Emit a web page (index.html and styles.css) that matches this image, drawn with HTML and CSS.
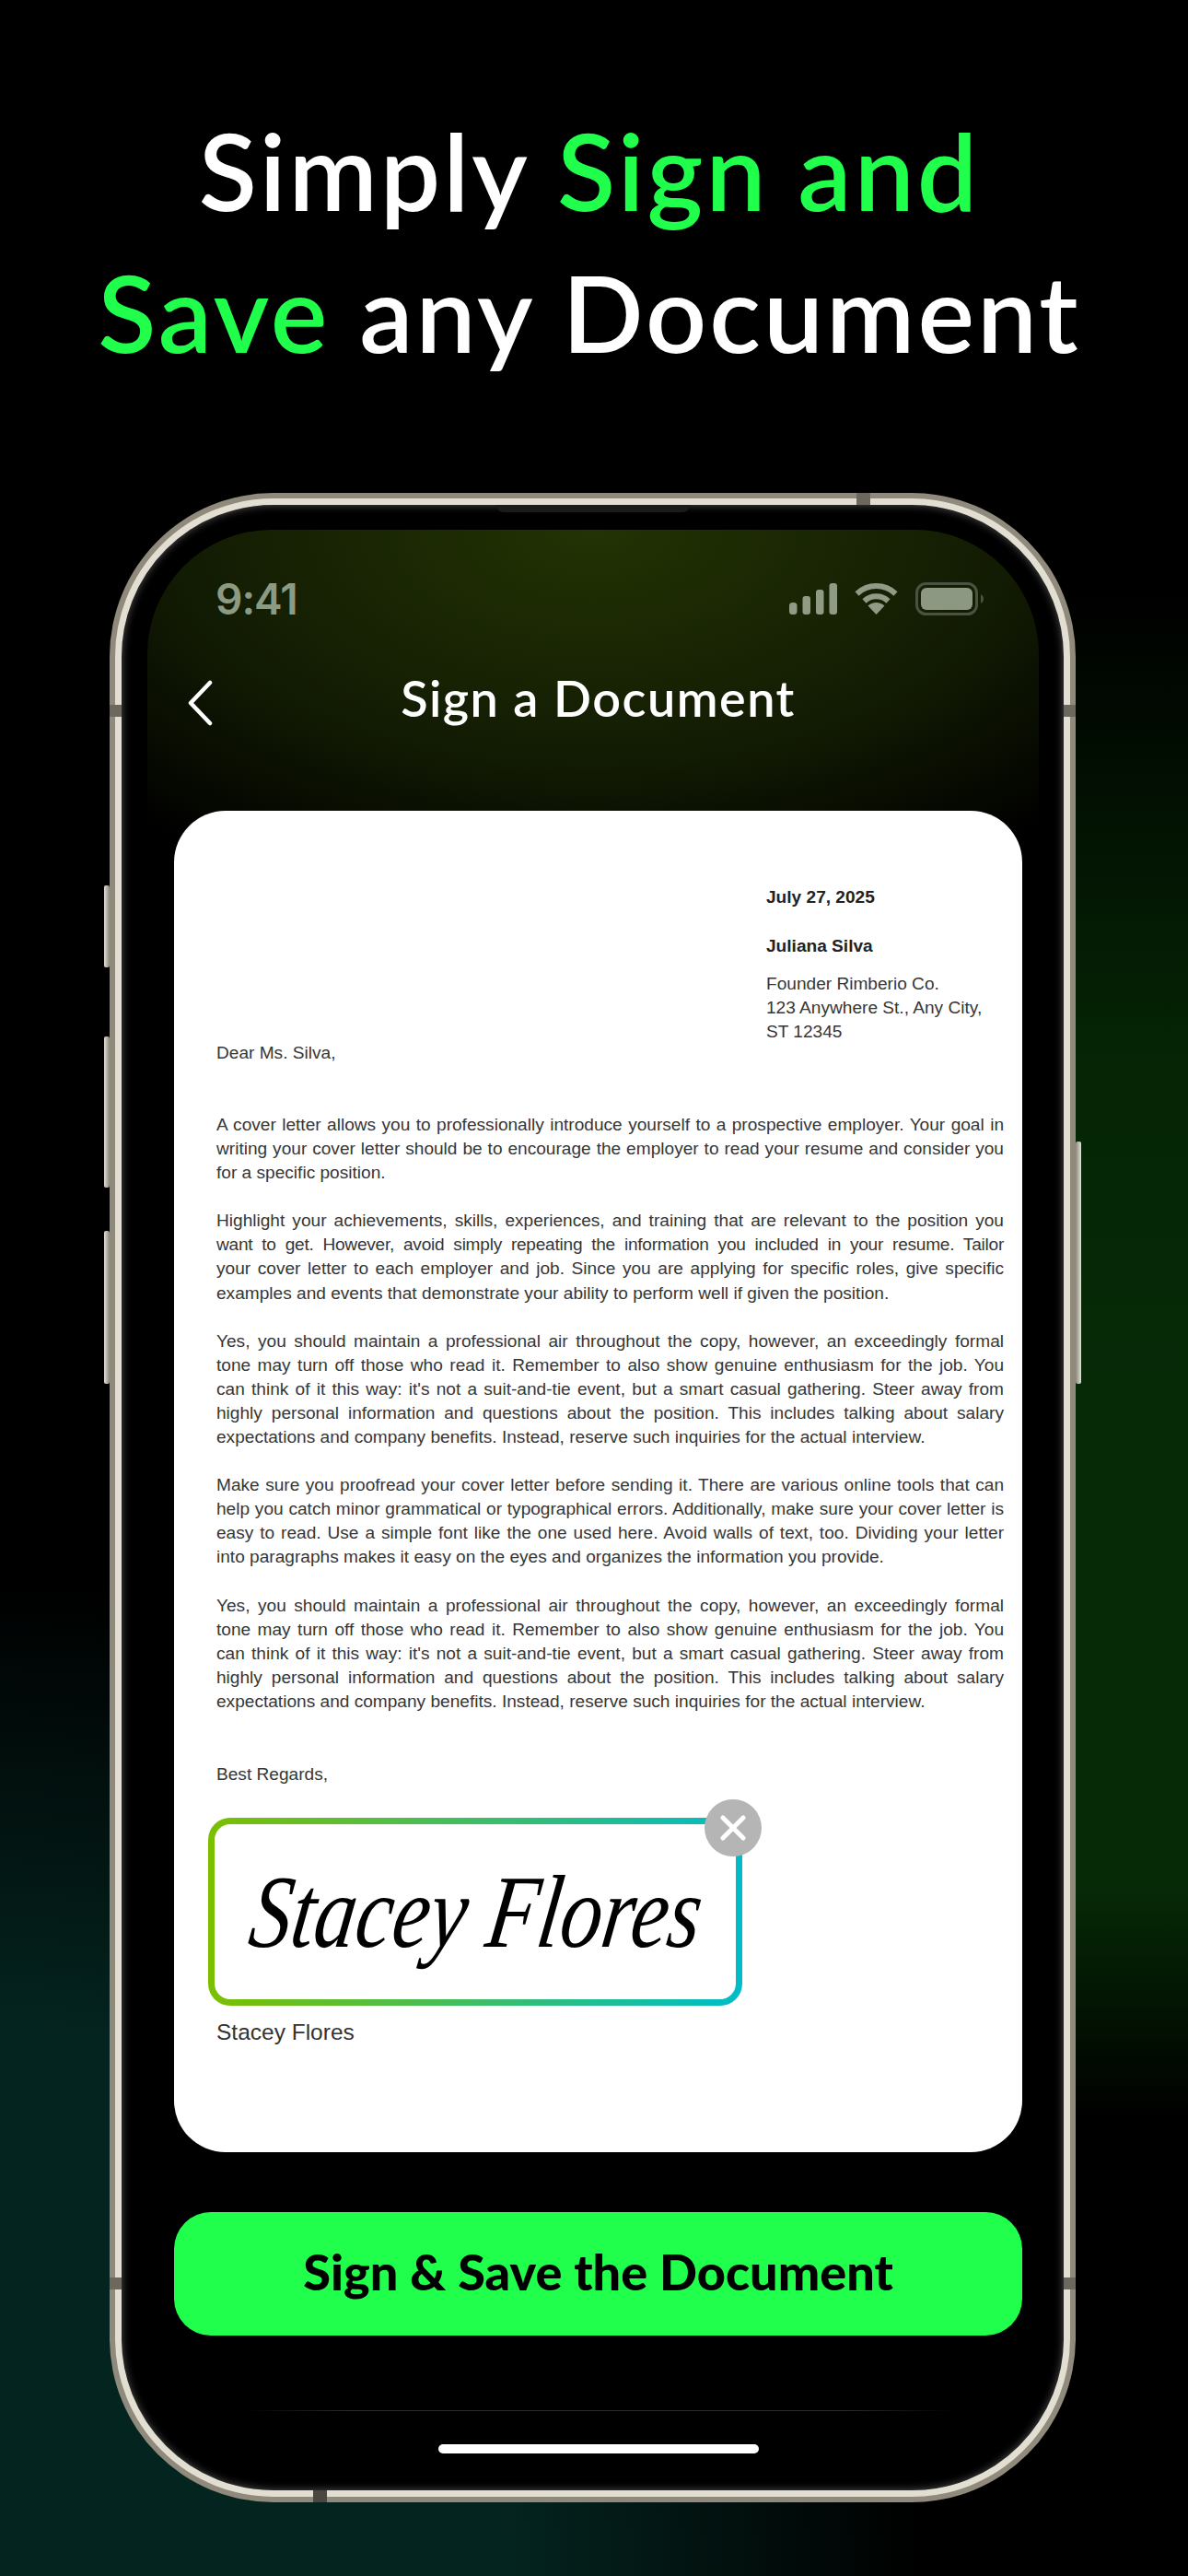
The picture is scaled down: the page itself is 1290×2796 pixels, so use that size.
FILE: index.html
```html
<!DOCTYPE html>
<html lang="en">
<head>
<meta charset="utf-8">
<title>Sign a Document</title>
<link rel="stylesheet" href="styles.css">
</head>
<body>
<h1 class="headline">Simply <span class="accent">Sign and</span><br><span class="accent">Save</span> any Document</h1>
<div class="phone">
  <i class="hw side-btn btn-a"></i><i class="hw side-btn btn-b"></i><i class="hw side-btn btn-c"></i><i class="hw side-btn btn-d"></i>
  <i class="hw band band-lt"></i><i class="hw band band-rt"></i><i class="hw band band-lb"></i><i class="hw band band-rb"></i><i class="hw band band-top"></i><i class="hw band band-bottom"></i>
  <i class="hw notch"></i>
  <main class="screen">
    <div class="status">
      <span class="time">9:41</span>
      <div class="status-icons">
        <svg class="signal" width="52" height="34" viewBox="0 0 52 34"><rect x="0" y="21" width="8.5" height="13" rx="3.5"/><rect x="14.5" y="14" width="8.5" height="20" rx="3"/><rect x="29" y="7" width="8.5" height="27" rx="3"/><rect x="43.5" y="0" width="8.5" height="34" rx="3"/></svg>
        <svg class="wifi" width="47" height="34" viewBox="0 0 47 34"><path class="arc" d="M2.5 11.5A30.5 30.5 0 0 1 44.500 11.500"/><path class="arc" d="M10.500 19.500A19 19 0 0 1 36.500 19.500"/><path class="wedge" d="M23.500 34L14.500 24.500A13 13 0 0 1 32.500 24.500Z"/></svg>
        <svg class="battery" width="74" height="36" viewBox="0 0 74 36"><rect class="batt-shell" x="1.500" y="1.500" width="65" height="33" rx="10"/><rect class="batt-fill" x="6" y="6" width="56" height="24" rx="6"/><path class="batt-nub" d="M71 13c2 1 3 3 3 5s-1 4-3 5z"/></svg>
      </div>
    </div>
    <nav class="nav">
      <svg class="back" width="28" height="50" viewBox="0 0 28 50"><path d="M24 3L3 25L24 47"/></svg>
      <span class="nav-title">Sign a Document</span>
    </nav>
    <article class="doc">
      <div class="doc-head">
        <p class="strong">July 27, 2025</p>
        <p class="strong name">Juliana Silva</p>
        <p class="address">Founder Rimberio Co.<br>123 Anywhere St., Any City,<br>ST 12345</p>
      </div>
      <p class="dear">Dear Ms. Silva,</p>
      <div class="doc-body">
        <p>A cover letter allows you to professionally introduce yourself to a prospective employer. Your goal in writing your cover letter should be to encourage the employer to read your resume and consider you for a specific position.</p>
        <p><span class="line">Highlight your achievements, skills, experiences, and training that are relevant to the position you</span><span class="line fit">want to get. However, avoid simply repeating the information you included in your resume. Tailor</span><span class="line">your cover letter to each employer and job. Since you are applying for specific roles, give specific</span>examples and events that demonstrate your ability to perform well if given the position.</p>
        <p>Yes, you should maintain a professional air throughout the copy, however, an exceedingly formal tone may turn off those who read it. Remember to also show genuine enthusiasm for the job. You can think of it this way: it's not a suit-and-tie event, but a smart casual gathering. Steer away from highly personal information and questions about the position. This includes talking about salary expectations and company benefits. Instead, reserve such inquiries for the actual interview.</p>
        <p>Make sure you proofread your cover letter before sending it. There are various online tools that can help you catch minor grammatical or typographical errors. Additionally, make sure your cover letter is easy to read. Use a simple font like the one used here. Avoid walls of text, too. Dividing your letter into paragraphs makes it easy on the eyes and organizes the information you provide.</p>
        <p>Yes, you should maintain a professional air throughout the copy, however, an exceedingly formal tone may turn off those who read it. Remember to also show genuine enthusiasm for the job. You can think of it this way: it's not a suit-and-tie event, but a smart casual gathering. Steer away from highly personal information and questions about the position. This includes talking about salary expectations and company benefits. Instead, reserve such inquiries for the actual interview.</p>
      </div>
      <p class="regards">Best Regards,</p>
      <div class="sig-box">
        <span class="signature">Stacey Flores</span>
        <span class="sig-close"><svg width="28" height="28" viewBox="0 0 28 28"><path d="M3 3L25 25M25 3L3 25"/></svg></span>
      </div>
      <p class="signer">Stacey Flores</p>
    </article>
    <button class="cta">Sign &amp; Save the Document</button>
    <div class="hairline"></div>
    <div class="home"></div>
  </main>
</div>
</body>
</html>
```
FILE: styles.css
```css
* { box-sizing: border-box; }
html, body { margin: 0; padding: 0; }
body {
  width: 1290px;
  height: 2796px;
  overflow: hidden;
  background-color: #000;
  background-image:
    radial-gradient(ellipse 1000px 1080px at 0 2796px, #04241f 0, #04241f 55%, rgba(4,36,31,0) 100%),
    linear-gradient(180deg, rgba(6,41,6,0) 640px, #052505 1150px, #062906 1500px, #062906 2050px, rgba(6,41,6,0) 2300px);
  background-repeat: no-repeat;
  background-size: 100% 100%, 240px 100%;
  background-position: 0 0, 100% 0;
  font-family: "Liberation Sans", Arial, sans-serif;
}
.headline {
  margin: 0;
  padding: 108px 10px 0 0;
  height: 415px;
  font-family: Lato, sans-serif;
  font-weight: 600;
  font-size: 116px;
  line-height: 154px;
  text-align: center;
  letter-spacing: 3px;
  color: #fff;
}
.accent { color: #20ff4c; }

.phone {
  position: relative;
  width: 1037px;
  height: 2169px;
  margin: 126px 0 0 125px;
  padding: 27px 27px 23px 28px;
  background: #000;
  border: 7px solid #e2ded2;
  border-radius: 172px;
  box-shadow: 0 0 0 6px #8f8a7c, inset 0 0 10px #555;
}
.hw { position: absolute; display: block; }
.side-btn { width: 6px; background: linear-gradient(90deg, #e4e0d4, #8b877b); border-radius: 2px; }
.btn-a { left: -19px; top: 413px; height: 89px; }
.btn-b { left: -19px; top: 577px; height: 164px; }
.btn-c { left: -19px; top: 788px; height: 166px; }
.btn-d { left: 1036px; top: 691px; height: 263px; transform: scaleX(-1); }
.band { background: #6d685e; }
.band-lt, .band-lb { left: -13px; width: 13px; height: 13px; }
.band-rt, .band-rb { left: 1023px; width: 13px; height: 13px; }
.band-lt, .band-rt { top: 217px; }
.band-lb, .band-rb { top: 1924px; }
.band-top { left: 798px; top: -13px; width: 15px; height: 13px; }
.band-bottom { left: 208px; top: 2155px; width: 15px; height: 13px; background: #4a4640; }
.notch { left: 407px; top: 0; width: 210px; height: 8px; background: #1b1b1b; border-radius: 0 0 8px 8px; }

.screen {
  display: flex;
  flex-direction: column;
  height: 2105px;
  padding: 0 18px 0 29px;
  border-radius: 135px;
  background: radial-gradient(ellipse 760px 420px at 50% 0, #233304 0, #121b03 60%, #000 100%);
}

.status {
  display: flex;
  justify-content: space-between;
  align-items: center;
  height: 36px;
  margin-top: 57px;
  padding: 0 42px 0 45px;
}
.time {
  font-family: Inter, sans-serif;
  font-weight: 600;
  font-size: 46px;
  line-height: 36px;
  letter-spacing: -1px;
  color: #8c9a82;
}
.status-icons { display: flex; align-items: center; gap: 19px; }
.signal rect { fill: #8f9b84; }
.wifi .arc { fill: none; stroke: #8f9b84; stroke-width: 6; }
.wifi .wedge { fill: #8f9b84; }
.batt-shell { fill: none; stroke: #4a5243; stroke-width: 3; }
.batt-fill { fill: #8d9882; }
.batt-nub { fill: #4a5243; }

.nav {
  display: grid;
  grid-template-columns: 1fr auto 1fr;
  align-items: center;
  height: 60px;
  margin-top: 60px;
}
.back { margin-left: 15px; }
.back path { fill: none; stroke: #fff; stroke-width: 4.500; stroke-linecap: round; stroke-linejoin: round; }
.nav-title {
  padding-bottom: 10px;
  font-family: Lato, sans-serif;
  font-weight: 600;
  font-size: 54px;
  line-height: 60px;
  letter-spacing: 1.500px;
  color: #fff;
}

.doc {
  flex: none;
  height: 1456px;
  margin-top: 92px;
  padding: 81px 20px 0 46px;
  background: #fff;
  border-radius: 56px;
  font-size: 19.100px;
  line-height: 26px;
  color: #363636;
}
.doc p { margin: 0; }
.doc-head { margin-left: 597px; }
.doc .strong { font-weight: 700; color: #222; }
.doc .name { margin-top: 27px; }
.doc .address { margin-top: 15px; }
.doc .dear { margin-top: -3px; }
.doc-body { display: flex; flex-direction: column; gap: 26px; margin-top: 52px; line-height: 26.100px; text-align: justify; }
.line { display: block; text-align-last: justify; }
.line.fit { letter-spacing: -0.250px; }
.doc .regards { margin-top: 53px; }

.sig-box {
  position: relative;
  display: flex;
  align-items: center;
  width: 580px;
  height: 204px;
  margin: 34px 0 0 -9px;
  padding-left: 40px;
  border: 7px solid transparent;
  border-radius: 24px;
  background: linear-gradient(#fff, #fff) padding-box, linear-gradient(90deg, #7cbf00, #00bcc8) border-box;
}
.signature {
  font-family: "Liberation Serif", serif;
  font-style: italic;
  font-size: 90px;
  line-height: 120px;
  color: #000;
  white-space: nowrap;
  transform: skewX(-8deg) scaleY(1.250);
  transform-origin: 0 50%;
}
.sig-close {
  position: absolute;
  right: -28px;
  top: -27px;
  display: flex;
  align-items: center;
  justify-content: center;
  width: 62px;
  height: 62px;
  border-radius: 50%;
  background: #b5b5b5;
}
.sig-close path { fill: none; stroke: #fff; stroke-width: 5; stroke-linecap: round; }
.doc .signer { margin-top: 14px; font-size: 24.500px; line-height: 30px; color: #333; }

.cta {
  flex: none;
  height: 134px;
  margin-top: 65px;
  padding: 0 0 6px;
  border: 0;
  border-radius: 40px;
  background: #20ff4c;
  font-family: Lato, sans-serif;
  font-weight: 900;
  font-size: 54px;
  color: #000;
}
.hairline {
  flex: none;
  width: 770px;
  height: 1px;
  margin-top: 81px;
  align-self: center;
  background: linear-gradient(90deg, rgba(60,60,60,0), #2a2a2a 15%, #2a2a2a 85%, rgba(60,60,60,0));
}
.home {
  flex: none;
  align-self: center;
  width: 348px;
  height: 10px;
  margin-top: 36px;
  border-radius: 5px;
  background: #fff;
}
```
